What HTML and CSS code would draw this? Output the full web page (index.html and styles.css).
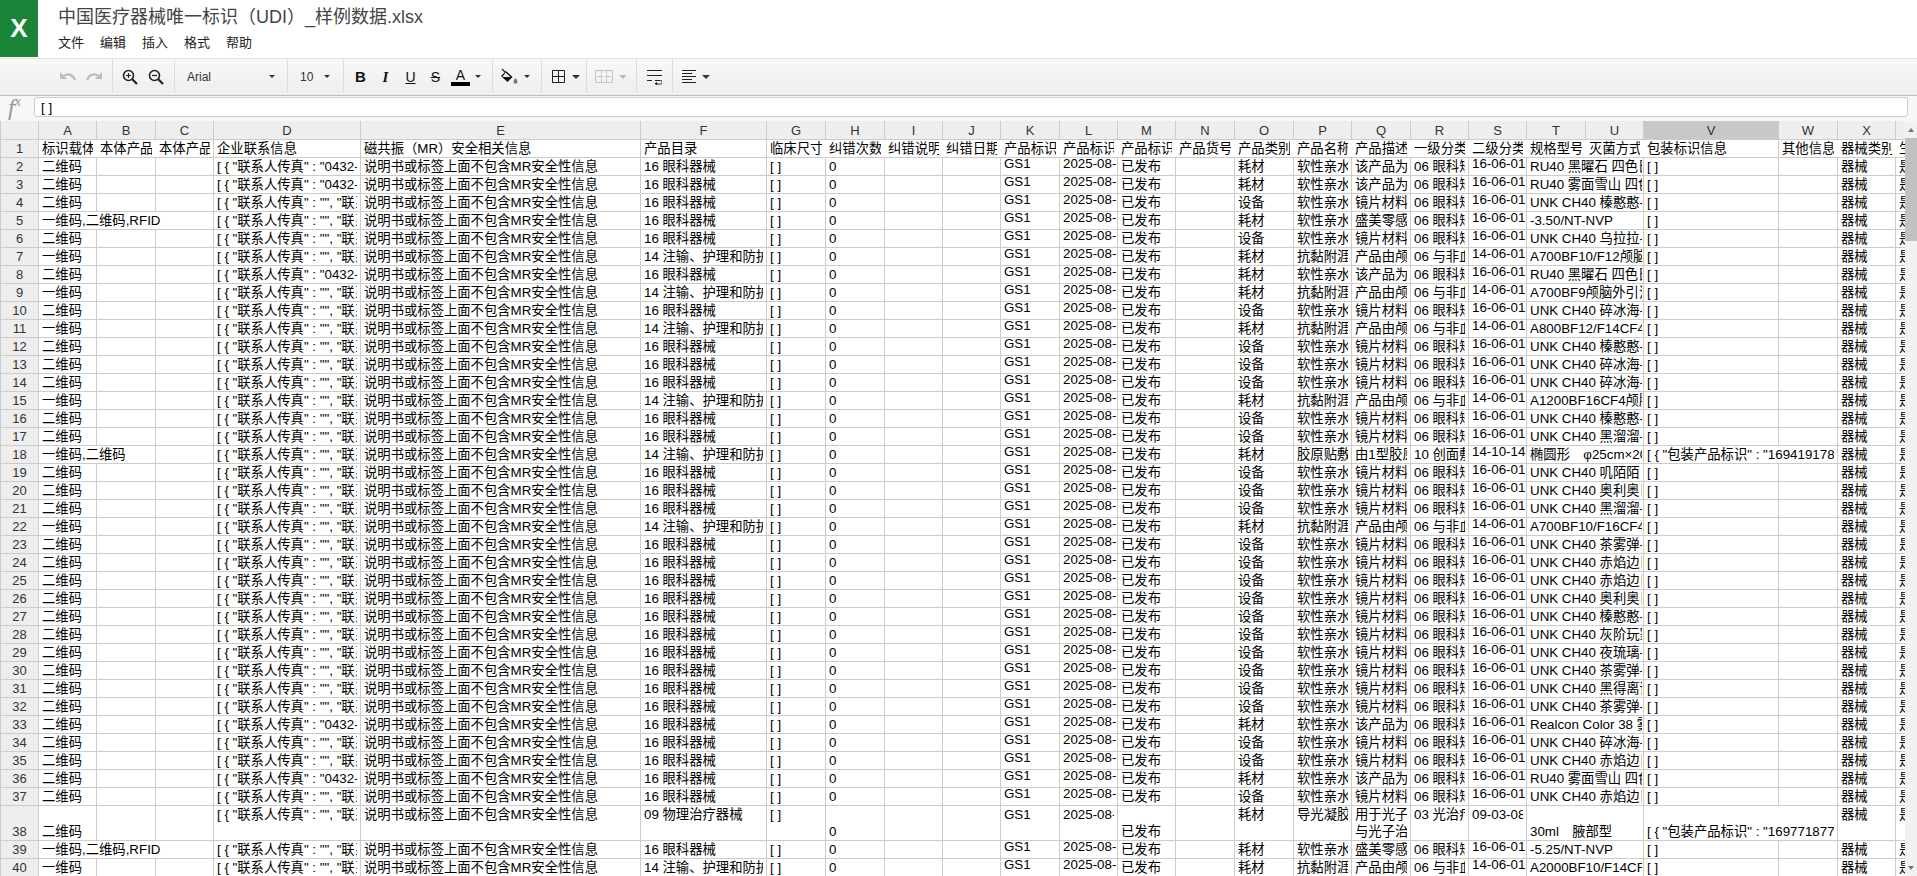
FILE: index.html
```html
<!DOCTYPE html>
<html lang="zh-CN">
<head>
    <meta charset="UTF-8">
    <title>中国医疗器械唯一标识（UDI）_样例数据.xlsx</title>
    <link rel="stylesheet" href="styles.css">
</head>
<body>
    <header class="topbar">
        <div class="logo"><span>X</span></div>
        <div class="doc">
            <div class="doc-title">中国医疗器械唯一标识（UDI）_样例数据.xlsx</div>
            <nav class="menu">
                <span>文件</span><span>编辑</span><span>插入</span><span>格式</span><span>帮助</span>
            </nav>
        </div>
    </header>

    <div class="toolbar">
        <div class="tool-group g-history">
            <svg width="18" height="12" viewBox="0 0 18 12"><path d="M1 1v7h7L5.6 5.6C8.5 3.6 12.5 4.4 15 9.5l2-1C14.5 2 8.800 .6 4.200 4.200z" fill="#bdbdbd"/></svg>
            <svg width="18" height="12" viewBox="0 0 18 12"><path d="M17 1v7h-7l2.400-2.400C9.500 3.600 5.500 4.400 3 9.500l-2-1C3.500 2 9.200 .6 13.800 4.200z" fill="#bdbdbd"/></svg>
        </div>
        <div class="tool-group g-zoom">
            <svg width="16" height="16" viewBox="0 0 16 16" fill="none" stroke="#222" stroke-width="1.600"><circle cx="6.500" cy="6.500" r="5"/><path d="M10.300 10.300L15 15" stroke-width="2.200"/><path d="M4 6.500h5M6.500 4v5" stroke-width="1.200"/></svg>
            <svg width="16" height="16" viewBox="0 0 16 16" fill="none" stroke="#222" stroke-width="1.600"><circle cx="6.500" cy="6.500" r="5"/><path d="M10.300 10.300L15 15" stroke-width="2.200"/><path d="M4 6.500h5" stroke-width="1.200"/></svg>
        </div>
        <div class="tool-group g-font">
            <span class="tool-label">Arial</span><i class="caret"></i>
        </div>
        <div class="tool-group g-size">
            <span class="tool-label">10</span><i class="caret"></i>
        </div>
        <div class="tool-group g-format">
            <span class="fmt fmt-b">B</span>
            <span class="fmt fmt-i">I</span>
            <span class="fmt fmt-u">U</span>
            <span class="fmt fmt-s">S</span>
            <span class="fmt fmt-a">A</span>
            <i class="caret caret-a"></i>
        </div>
        <div class="tool-group g-fill">
            <svg width="18" height="17" viewBox="0 0 18 17"><path d="M2 1l3 3" stroke="#222" stroke-width="1.200"/><path d="M6 3l6.500 6-5 5L1 8z" fill="#111"/><path d="M5.500 4.500L10.500 9H2.500z" fill="#f2f2f2"/><path d="M15.500 10c1.300 1.800 2 2.600 2 3.700a2 2 0 01-4 0c0-1.100.700-1.900 2-3.700z" fill="#777"/></svg>
            <i class="caret"></i>
        </div>
        <div class="tool-group g-borders">
            <svg width="13" height="13" viewBox="0 0 13 13" fill="none" stroke="#222"><path d="M.5 .5h12v12H.5zM6.500 .5v12M.5 6.500h12"/></svg>
            <i class="caret caret-lg"></i>
        </div>
        <div class="tool-group g-merge">
            <svg width="18" height="13" viewBox="0 0 18 13" fill="none" stroke="#c4c4c4"><path d="M.5 .5h17v12H.5zM6.500 .5v3M11.500 .5v3M6.500 9.500v3M11.500 9.500v3"/><path d="M2.500 6.500h5M5.500 4.500l2 2-2 2M15.500 6.500h-5M12.500 4.500l-2 2 2 2"/></svg>
            <i class="caret caret-lg caret-off"></i>
        </div>
        <div class="tool-group g-wrap">
            <svg width="15" height="16" viewBox="0 0 15 16" fill="none" stroke="#222"><path d="M0 1.500h15M0 6.500h15M0 11.500h5M8 11.500h5.500a1 1 0 010 3.500H9"/><path d="M10 12.800V16.500L7.500 14.700z" fill="#222" stroke="none"/></svg>
        </div>
        <div class="tool-group g-align">
            <svg width="14" height="13" viewBox="0 0 14 13" fill="none" stroke="#222"><path d="M0 .5h14M0 3.500h10M0 6.500h14M0 9.500h10M0 12.500h14"/></svg>
            <i class="caret caret-lg"></i>
        </div>
    </div>

    <div class="formula-bar">
        <div class="fx">f<sup>x</sup></div>
        <div class="formula-input">[ ]</div>
    </div>

    <div class="sheet-area">
        <div class="sheet-wrap">
            <table class="sheet" id="sheet"></table>
        </div>
        <div class="scrollbar">
            <div class="scroll-btn"><i class="arrow-up"></i></div>
            <div class="scroll-thumb"></div>
            <div class="scroll-track"></div>
            <div class="scroll-btn"><i class="arrow-down"></i></div>
        </div>
    </div>

    <script src="sheet.js"></script>
</body>
</html>
```

FILE: styles.css
```css
* {
    margin: 0;
    padding: 0;
    box-sizing: border-box;
}

body {
    font-family: 'Liberation Sans', 'Noto Sans CJK SC', sans-serif;
    background: white;
    color: #000;
    height: 876px;
    overflow: hidden;
}

/* title + menu */
.topbar {
    display: flex;
    height: 58px;
}

.logo {
    width: 38px;
    height: 57px;
    background: #1a8539;
    color: white;
    display: flex;
    align-items: center;
    justify-content: center;
    font-size: 26px;
    font-weight: bold;
}

.doc {
    padding-left: 20px;
}

.doc-title {
    font-size: 18px;
    line-height: 22px;
    padding-top: 6px;
    color: #444;
}

.menu {
    display: flex;
    gap: 16px;
    font-size: 13px;
    line-height: 18px;
    margin-top: 6px;
    color: #222;
}

/* toolbar */
.toolbar {
    display: flex;
    height: 38px;
    padding: 1px 0 2px;
    border-top: 1px solid #e2e2e2;
    border-bottom: 1px solid #bdbdbd;
    background: linear-gradient(#f8f8f8, #eeeeee);
}

.tool-group {
    display: flex;
    align-items: center;
    border-right: 1px solid #dcdcdc;
}

.g-history { width: 113px; padding-left: 59px; gap: 8px; }
.g-zoom { width: 62px; padding-left: 9px; gap: 10px; }
.g-font { width: 113px; padding: 0 12px; justify-content: space-between; }
.g-size { width: 56px; padding: 0 13px 0 12px; justify-content: space-between; }
.g-format { width: 149px; padding-left: 4px; }
.g-fill { width: 49px; padding-left: 7px; gap: 6px; }
.g-borders { width: 45px; padding-left: 10px; gap: 7px; }
.g-merge { width: 50px; padding-left: 8px; gap: 6px; }
.g-wrap { width: 36px; padding-left: 10px; }
.g-align { padding-left: 9px; gap: 6px; border-right: 0; }

.tool-label {
    font-size: 12px;
    color: #333;
}

.caret {
    width: 0;
    height: 0;
    border-left: 3px solid transparent;
    border-right: 3px solid transparent;
    border-top: 3px solid #333;
}

.caret-lg {
    border-left-width: 4px;
    border-right-width: 4px;
    border-top-width: 4px;
}

.caret-off {
    border-top-color: #bbb;
}

.caret-a {
    margin-left: 2px;
}

.fmt {
    width: 25px;
    text-align: center;
    font-size: 14px;
    line-height: 18px;
    color: #111;
}

.fmt-b { font-weight: bold; font-size: 15px; }
.fmt-i { font-family: 'Liberation Serif', serif; font-style: italic; font-weight: bold; font-size: 15px; }
.fmt-u { text-decoration: underline; font-size: 14px; }
.fmt-s { text-decoration: line-through; font-size: 14px; }

.fmt-a {
    font-size: 14px;
    line-height: 14px;
    width: 19px;
    margin: 0 3px;
    border-bottom: 4px solid #000;
}

/* formula bar */
.formula-bar {
    display: flex;
    height: 25px;
    padding: 1px 9px 4px 0;
    background: #f7f7f7;
}

.fx {
    width: 34px;
    padding-left: 8px;
    font-family: 'Liberation Serif', serif;
    font-style: italic;
    font-size: 24px;
    line-height: 21px;
    color: #999;
}

.fx sup {
    font-size: 14px;
    line-height: 0;
}

.formula-input {
    flex: 1;
    background: white;
    border: 1px solid #ccc;
    border-radius: 3px;
    padding-left: 6px;
    font-size: 13.33px;
    line-height: 19px;
}

/* grid */
.sheet-area {
    display: flex;
    height: 755px;
}

.sheet-wrap {
    flex: 1;
    overflow: hidden;
}

.sheet {
    border-collapse: collapse;
    table-layout: fixed;
    width: 1955px;
    font-size: 13.33px;
    line-height: 17px;
}

.sheet td,
.sheet th {
    padding: 0 3px;
    height: 18px;
    border: 1px solid #cccccc;
    vertical-align: bottom;
    font-weight: normal;
    text-align: left;
}

.sheet td.spec {
    padding-right: 1px;
}

.sheet .cell {
    height: 17px;
    overflow: hidden;
    white-space: nowrap;
}

.sheet tr:first-child th {
    border-top: 0;
}

.sheet th.col-head,
.sheet th.row-head {
    background: #eeeeee;
    text-align: center;
    font-size: 13px;
    color: #333;
    padding: 0;
}

.sheet th.col-selected {
    background: #c8c8c8;
}

/* numbers and dates sit a little higher in their rows */
.sheet .raised .cell {
    position: relative;
    top: -3px;
    overflow: visible;
}

.sheet .no-line {
    border-right-color: transparent;
}

.sheet tr.tall td {
    height: 35px;
}

.sheet tr.tall .cell {
    height: auto;
}

.sheet tr.tall td.top {
    vertical-align: top;
}

/* scrollbar */
.scrollbar {
    width: 12px;
    display: flex;
    flex-direction: column;
    background: #f1f1f1;
}

.scroll-btn {
    height: 17px;
    display: flex;
    align-items: center;
    justify-content: center;
}

.scroll-thumb {
    height: 103px;
    background: #c1c1c1;
}

.scroll-track {
    flex: 1;
}

.arrow-up,
.arrow-down {
    width: 0;
    height: 0;
    border-left: 3px solid transparent;
    border-right: 3px solid transparent;
}

.arrow-up { border-bottom: 4px solid #777; }
.arrow-down { border-top: 4px solid #777; }
```

FILE: sheet.js
```js
// column edges measured in px, first one is the row number column
const edges = [0, 38, 96, 155, 213, 360, 640, 766, 825, 884, 942, 1000, 1059, 1117, 1175, 1234, 1293, 1351, 1410, 1468, 1526, 1585, 1643, 1778, 1837, 1895, 1955];
const letters = 'ABCDEFGHIJKLMNOPQRSTUVWXY'.split('');

const titles = ['标识载体', '本体产品', '本体产品', '企业联系信息', '磁共振（MR）安全相关信息', '产品目录', '临床尺寸', '纠错次数', '纠错说明', '纠错日期', '产品标识', '产品标识', '产品标识', '产品货号', '产品类别', '产品名称', '产品描述', '一级分类', '二级分类', '规格型号', '灭菌方式', '包装标识信息', '其他信息', '器械类别', '生产'];

// row 1 has no visible line after these columns
const noLineHead = ['A', 'B', 'G', 'H', 'I', 'J', 'K', 'L', 'M', 'N', 'O', 'P', 'Q', 'R', 'S', 'T', 'U', 'W', 'X'];

const FAX = '[ { "联系人传真" : "0432-8888", "联系';
const NOFAX = '[ { "联系人传真" : "", "联系人电话" : "';
const EYE = '16 眼科器械';
const NURSE = '14 注输、护理和防护器械';

const kinds = {
    // lens, no fax
    L: { a: '二维码', d: NOFAX, f: EYE, o: '设备', p: '软性亲水', q: '镜片材料', r: '06 眼科矫正', s: '16-06-01' },
    // lens, with fax
    C: { a: '二维码', d: FAX, f: EYE, o: '耗材', p: '软性亲水', q: '该产品为', r: '06 眼科矫正', s: '16-06-01' },
    // catheter
    A: { a: '一维码', d: NOFAX, f: NURSE, o: '耗材', p: '抗黏附涯', q: '产品由颅', r: '06 与非血管', s: '14-06-01' },
    // rfid
    N: { a: '一维码,二维码,RFID', span: 3, d: NOFAX, f: EYE, o: '耗材', p: '软性亲水', q: '盛美零感', r: '06 眼科矫正', s: '16-06-01' },
    // collagen dressing
    G: { a: '一维码,二维码', span: 2, d: NOFAX, f: NURSE, o: '耗材', p: '胶原贴敷', q: '由1型胶原', r: '10 创面敷料', s: '14-10-14', v: '[ { "包装产品标识" : "169419178412" }' }
};

const rows = [
    ['C', 'RU40 黑曜石 四色日抛软镜'],
    ['C', 'RU40 雾面雪山 四色日抛软镜'],
    ['L', 'UNK CH40 榛憨憨-日抛软镜'],
    ['N', '-3.50/NT-NVP'],
    ['L', 'UNK CH40 乌拉拉-日抛软镜'],
    ['A', 'A700BF10/F12颅脑外引流管'],
    ['C', 'RU40 黑曜石 四色日抛软镜'],
    ['A', 'A700BF9颅脑外引流管组件'],
    ['L', 'UNK CH40 碎冰海-日抛软镜'],
    ['A', 'A800BF12/F14CF4颅脑'],
    ['L', 'UNK CH40 榛憨憨-日抛软镜'],
    ['L', 'UNK CH40 碎冰海-日抛软镜'],
    ['L', 'UNK CH40 碎冰海-日抛软镜'],
    ['A', 'A1200BF16CF4颅脑外引流'],
    ['L', 'UNK CH40 榛憨憨-日抛软镜'],
    ['L', 'UNK CH40 黑溜溜-日抛软镜'],
    ['G', '椭圆形　φ25cm×20cm'],
    ['L', 'UNK CH40 叽陌陌 '],
    ['L', 'UNK CH40 奥利奥日抛软镜'],
    ['L', 'UNK CH40 黑溜溜-日抛软镜'],
    ['A', 'A700BF10/F16CF4颅脑'],
    ['L', 'UNK CH40 茶雾弹-日抛软镜'],
    ['L', 'UNK CH40 赤焰边日抛软镜'],
    ['L', 'UNK CH40 赤焰边日抛软镜'],
    ['L', 'UNK CH40 奥利奥日抛软镜'],
    ['L', 'UNK CH40 榛憨憨-日抛软镜'],
    ['L', 'UNK CH40 灰阶玩家日抛软镜'],
    ['L', 'UNK CH40 夜琉璃-日抛软镜'],
    ['L', 'UNK CH40 茶雾弹-日抛软镜'],
    ['L', 'UNK CH40 黑得离谱日抛软镜'],
    ['L', 'UNK CH40 茶雾弹-日抛软镜'],
    ['C', 'Realcon Color 38 雾面日抛'],
    ['L', 'UNK CH40 碎冰海-日抛软镜'],
    ['L', 'UNK CH40 赤焰边日抛软镜'],
    ['C', 'RU40 雾面雪山 四色日抛软镜'],
    ['L', 'UNK CH40 赤焰边日抛软镜']
];

const cell = (tag, text, cls, span) => {
    const c = cls ? ' class="' + cls + '"' : '';
    const s = span ? ' colspan="' + span + '"' : '';
    return '<' + tag + c + s + '><div class="cell">' + text + '</div></' + tag + '>';
};

function normalRow(num, kind, spec) {
    const k = kinds[kind];
    let html = '<tr><th class="row-head">' + num + '</th>';
    html += cell('td', k.a, '', k.span);
    for (let i = k.span || 1; i < 3; i++) html += cell('td', '');
    html += cell('td', k.d) + cell('td', '说明书或标签上面不包含MR安全性信息') + cell('td', k.f);
    html += cell('td', '[ ]') + cell('td', '0') + cell('td', '') + cell('td', '');
    html += cell('td', 'GS1', 'raised') + cell('td', '2025-08-', 'raised');
    html += cell('td', '已发布') + cell('td', '') + cell('td', k.o) + cell('td', k.p) + cell('td', k.q) + cell('td', k.r);
    html += cell('td', k.s, 'raised') + cell('td', spec, 'spec', 2);
    html += k.v ? cell('td', k.v, '', 2) : cell('td', '[ ]') + cell('td', '');
    html += cell('td', '器械') + cell('td', '是');
    return html + '</tr>';
}

function tallRow() {
    let html = '<tr class="tall"><th class="row-head">38</th>';
    html += cell('td', '二维码') + cell('td', '') + cell('td', '');
    html += cell('td', NOFAX, 'top') + cell('td', '说明书或标签上面不包含MR安全性信息', 'top') + cell('td', '09 物理治疗器械', 'top');
    html += cell('td', '[ ]', 'top') + cell('td', '0') + cell('td', '') + cell('td', '');
    html += cell('td', 'GS1', 'top') + cell('td', '2025-08-', 'top') + cell('td', '已发布') + cell('td', '');
    html += cell('td', '耗材', 'top') + cell('td', '导光凝胶', 'top') + cell('td', '用于光子<br>与光子治', 'top');
    html += cell('td', '03 光治疗', 'top') + cell('td', '09-03-08', 'top');
    html += cell('td', '30ml　腋部型', 'spec', 2) + cell('td', '[ { "包装产品标识" : "169771877246" }', '', 2);
    html += cell('td', '器械', 'top') + cell('td', '是', 'top');
    return html + '</tr>';
}

let html = '<colgroup>';
for (let i = 1; i < edges.length; i++) {
    html += '<col style="width:' + (edges[i] - edges[i - 1]) + 'px">';
}
html += '</colgroup>';

html += '<tr><th class="col-head"></th>';
letters.forEach(l => {
    html += '<th class="col-head' + (l === 'V' ? ' col-selected' : '') + '">' + l + '</th>';
});
html += '</tr>';

html += '<tr><th class="row-head">1</th>';
titles.forEach((t, i) => {
    html += cell('td', t, noLineHead.includes(letters[i]) ? 'no-line' : '');
});
html += '</tr>';

rows.forEach((r, i) => {
    html += normalRow(i + 2, r[0], r[1]);
});
html += tallRow();
html += normalRow(39, 'N', '-5.25/NT-NVP');
html += normalRow(40, 'A', 'A2000BF10/F14CF4颅脑');

document.getElementById('sheet').innerHTML = html;
```
